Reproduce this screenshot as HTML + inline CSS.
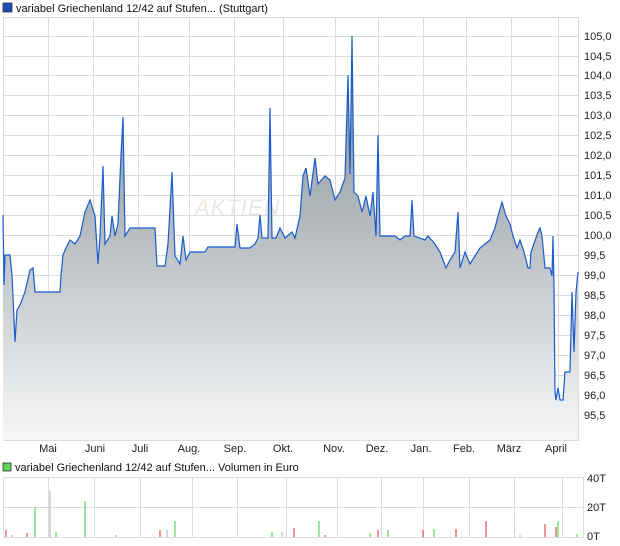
<!DOCTYPE html>
<html><head><meta charset="utf-8"><style>
html,body{margin:0;padding:0;background:#fff;}
svg{display:block;font-family:"Liberation Sans",sans-serif;}
</style></head><body>
<svg width="620" height="546" viewBox="0 0 620 546" xmlns="http://www.w3.org/2000/svg">
<defs>
<linearGradient id="g" gradientUnits="userSpaceOnUse" x1="0" y1="36" x2="0" y2="440">
<stop offset="0" stop-color="#7f888d"/><stop offset="0.45" stop-color="#b2b9bd"/><stop offset="1" stop-color="#f6f7f8"/>
</linearGradient>
</defs>
<rect x="3" y="3" width="9" height="9" fill="#1c4fb5" stroke="#333" stroke-width="0.8"/>
<text x="16" y="12" font-size="11" fill="#111">variabel Griechenland 12/42 auf Stufen... (Stuttgart)</text>
<g stroke="#dcdcdc" stroke-width="1">
<rect x="3.5" y="17.5" width="575" height="423" fill="none"/>
<line x1="3" x2="578" y1="36.5" y2="36.5"/><line x1="3" x2="578" y1="75.5" y2="75.5"/><line x1="3" x2="578" y1="115.5" y2="115.5"/><line x1="3" x2="578" y1="155.5" y2="155.5"/><line x1="3" x2="578" y1="195.5" y2="195.5"/><line x1="3" x2="578" y1="235.5" y2="235.5"/><line x1="3" x2="578" y1="275.5" y2="275.5"/><line x1="3" x2="578" y1="315.5" y2="315.5"/><line x1="3" x2="578" y1="355.5" y2="355.5"/><line x1="3" x2="578" y1="395.5" y2="395.5"/>
<line x1="3" x2="578" y1="56.5" y2="56.5"/><line x1="3" x2="578" y1="95.5" y2="95.5"/><line x1="3" x2="578" y1="135.5" y2="135.5"/><line x1="3" x2="578" y1="175.5" y2="175.5"/><line x1="3" x2="578" y1="215.5" y2="215.5"/><line x1="3" x2="578" y1="255.5" y2="255.5"/><line x1="3" x2="578" y1="295.5" y2="295.5"/><line x1="3" x2="578" y1="335.5" y2="335.5"/><line x1="3" x2="578" y1="375.5" y2="375.5"/><line x1="3" x2="578" y1="415.5" y2="415.5"/>
<line x1="48.5" x2="48.5" y1="17" y2="440"/><line x1="93.5" x2="93.5" y1="17" y2="440"/><line x1="138.5" x2="138.5" y1="17" y2="440"/><line x1="189.5" x2="189.5" y1="17" y2="440"/><line x1="234.5" x2="234.5" y1="17" y2="440"/><line x1="283.5" x2="283.5" y1="17" y2="440"/><line x1="335.5" x2="335.5" y1="17" y2="440"/><line x1="378.5" x2="378.5" y1="17" y2="440"/><line x1="423.5" x2="423.5" y1="17" y2="440"/><line x1="466.5" x2="466.5" y1="17" y2="440"/><line x1="511.5" x2="511.5" y1="17" y2="440"/><line x1="558.5" x2="558.5" y1="17" y2="440"/>
</g>
<text x="195" y="215" font-size="22" fill="#ece6e2" font-style="italic" letter-spacing="1">AKTIEN</text>
<path d="M3,215 L4,285 L5,255 L10,255 L12,275 L15,342 L17,310 L20,305 L25,292 L30,270 L33,268 L35,292 L60,292 L61,275 L63,255 L66,248 L70,240 L75,244 L80,236 L85,212 L90,200 L95,216 L98,264 L100,236 L103,166 L105,244 L110,236 L112,216 L115,236 L118,224 L121,155 L123,117 L125,236 L130,228 L155,228 L157,266 L165,266 L168,244 L172,172 L175,256 L180,264 L183,236 L186,260 L190,252 L205,252 L208,247 L235,247 L237,224 L240,248 L250,248 L255,244 L258,238 L260,215 L262,238 L268,238 L270,108 L272,238 L276,238 L280,228 L285,238 L292,232 L295,238 L300,216 L303,176 L306,168 L310,196 L315,158 L318,184 L325,176 L330,180 L335,200 L340,192 L345,178 L348,75 L350,174 L352,36 L354,192 L358,196 L362,212 L366,196 L370,216 L373,192 L376,236 L378,135 L380,236 L395,236 L400,240 L405,236 L410,236 L412,200 L414,236 L425,240 L428,236 L435,244 L440,252 L443,260 L446,268 L450,260 L455,252 L458,212 L460,268 L465,252 L470,264 L475,256 L480,248 L485,244 L490,240 L495,228 L498,216 L502,202 L506,216 L510,224 L513,236 L517,248 L520,240 L524,252 L528,268 L530,268 L531,252 L538,232 L540,228 L542,236 L545,268 L550,268 L552,276 L553,236 L554,288 L555,392 L556,400 L558,388 L560,400 L563,400 L565,372 L570,372 L572,292 L574,352 L576,292 L578,272 L578,440 L3,440 Z" fill="url(#g)"/>
<path d="M3,215 L4,285 L5,255 L10,255 L12,275 L15,342 L17,310 L20,305 L25,292 L30,270 L33,268 L35,292 L60,292 L61,275 L63,255 L66,248 L70,240 L75,244 L80,236 L85,212 L90,200 L95,216 L98,264 L100,236 L103,166 L105,244 L110,236 L112,216 L115,236 L118,224 L121,155 L123,117 L125,236 L130,228 L155,228 L157,266 L165,266 L168,244 L172,172 L175,256 L180,264 L183,236 L186,260 L190,252 L205,252 L208,247 L235,247 L237,224 L240,248 L250,248 L255,244 L258,238 L260,215 L262,238 L268,238 L270,108 L272,238 L276,238 L280,228 L285,238 L292,232 L295,238 L300,216 L303,176 L306,168 L310,196 L315,158 L318,184 L325,176 L330,180 L335,200 L340,192 L345,178 L348,75 L350,174 L352,36 L354,192 L358,196 L362,212 L366,196 L370,216 L373,192 L376,236 L378,135 L380,236 L395,236 L400,240 L405,236 L410,236 L412,200 L414,236 L425,240 L428,236 L435,244 L440,252 L443,260 L446,268 L450,260 L455,252 L458,212 L460,268 L465,252 L470,264 L475,256 L480,248 L485,244 L490,240 L495,228 L498,216 L502,202 L506,216 L510,224 L513,236 L517,248 L520,240 L524,252 L528,268 L530,268 L531,252 L538,232 L540,228 L542,236 L545,268 L550,268 L552,276 L553,236 L554,288 L555,392 L556,400 L558,388 L560,400 L563,400 L565,372 L570,372 L572,292 L574,352 L576,292 L578,272" fill="none" stroke="#1a5ccc" stroke-width="1.2"/>
<g font-size="11" fill="#222">
<text x="584" y="40">105,0</text><text x="584" y="60">104,5</text><text x="584" y="79">104,0</text><text x="584" y="99">103,5</text><text x="584" y="119">103,0</text><text x="584" y="139">102,5</text><text x="584" y="159">102,0</text><text x="584" y="179">101,5</text><text x="584" y="199">101,0</text><text x="584" y="219">100,5</text><text x="584" y="239">100,0</text><text x="584" y="259">99,5</text><text x="584" y="279">99,0</text><text x="584" y="299">98,5</text><text x="584" y="319">98,0</text><text x="584" y="339">97,5</text><text x="584" y="359">97,0</text><text x="584" y="379">96,5</text><text x="584" y="399">96,0</text><text x="584" y="419">95,5</text>
</g>
<g font-size="11" fill="#222" text-anchor="middle">
<text x="48" y="452">Mai</text><text x="95" y="452">Juni</text><text x="140" y="452">Juli</text><text x="189" y="452">Aug.</text><text x="235" y="452">Sep.</text><text x="283" y="452">Okt.</text><text x="334" y="452">Nov.</text><text x="377" y="452">Dez.</text><text x="421" y="452">Jan.</text><text x="464" y="452">Feb.</text><text x="509" y="452">März</text><text x="556" y="452">April</text>
</g>
<rect x="3" y="463" width="8" height="8" fill="#5cd65c" stroke="#333" stroke-width="0.8"/>
<text x="15" y="471" font-size="11" fill="#111">variabel Griechenland 12/42 auf Stufen... Volumen in Euro</text>
<g stroke="#dcdcdc" stroke-width="1">
<rect x="3.5" y="477.5" width="580" height="60" fill="none"/>
<line x1="3" x2="584" y1="507.5" y2="507.5"/>
<line x1="48.5" x2="48.5" y1="477" y2="537"/><line x1="94.5" x2="94.5" y1="477" y2="537"/><line x1="140.5" x2="140.5" y1="477" y2="537"/><line x1="192.5" x2="192.5" y1="477" y2="537"/><line x1="237.5" x2="237.5" y1="477" y2="537"/><line x1="286.5" x2="286.5" y1="477" y2="537"/><line x1="337.5" x2="337.5" y1="477" y2="537"/><line x1="381.5" x2="381.5" y1="477" y2="537"/><line x1="423.5" x2="423.5" y1="477" y2="537"/><line x1="469.5" x2="469.5" y1="477" y2="537"/><line x1="514.5" x2="514.5" y1="477" y2="537"/><line x1="562.5" x2="562.5" y1="477" y2="537"/>
</g>
<g stroke-width="1.2">
<line x1="50" x2="50" y1="537" y2="491" stroke="#bbb"/>
<line x1="35" x2="35" y1="537" y2="507" stroke="#5cd65c"/>
<line x1="85" x2="85" y1="537" y2="501" stroke="#5cd65c"/>
<line x1="6" x2="6" y1="537" y2="530" stroke="#e05050"/>
<line x1="27" x2="27" y1="537" y2="533" stroke="#e05050"/>
<line x1="56" x2="56" y1="537" y2="532" stroke="#5cd65c"/>
<line x1="160" x2="160" y1="537" y2="530" stroke="#e05050"/>
<line x1="167" x2="167" y1="537" y2="530" stroke="#bbb"/>
<line x1="175" x2="175" y1="537" y2="521" stroke="#5cd65c"/>
<line x1="272" x2="272" y1="537" y2="532" stroke="#5cd65c"/>
<line x1="282" x2="282" y1="537" y2="532" stroke="#bbb"/>
<line x1="294" x2="294" y1="537" y2="528" stroke="#e05050"/>
<line x1="319" x2="319" y1="537" y2="521" stroke="#5cd65c"/>
<line x1="378" x2="378" y1="537" y2="530" stroke="#e05050"/>
<line x1="388" x2="388" y1="537" y2="530" stroke="#5cd65c"/>
<line x1="423" x2="423" y1="537" y2="530" stroke="#e05050"/>
<line x1="434" x2="434" y1="537" y2="529" stroke="#5cd65c"/>
<line x1="456" x2="456" y1="537" y2="529" stroke="#e05050"/>
<line x1="486" x2="486" y1="537" y2="521" stroke="#e05050"/>
<line x1="545" x2="545" y1="537" y2="524" stroke="#e05050"/>
<line x1="556" x2="556" y1="537" y2="527" stroke="#e05050"/>
<line x1="558" x2="558" y1="537" y2="521" stroke="#5cd65c"/>
<line x1="577" x2="577" y1="537" y2="534" stroke="#5cd65c"/>
<line x1="12" x2="12" y1="537" y2="535" stroke="#5cd65c"/>
<line x1="116" x2="116" y1="537" y2="535" stroke="#5cd65c"/>
<line x1="325" x2="325" y1="537" y2="535" stroke="#e05050"/>
<line x1="370" x2="370" y1="537" y2="533" stroke="#5cd65c"/>
<line x1="520" x2="520" y1="537" y2="535" stroke="#bbb"/>
</g>
<g font-size="11" fill="#222">
<text x="587" y="482">40T</text><text x="587" y="511">20T</text><text x="587" y="540">0T</text>
</g>
</svg>
</body></html>
